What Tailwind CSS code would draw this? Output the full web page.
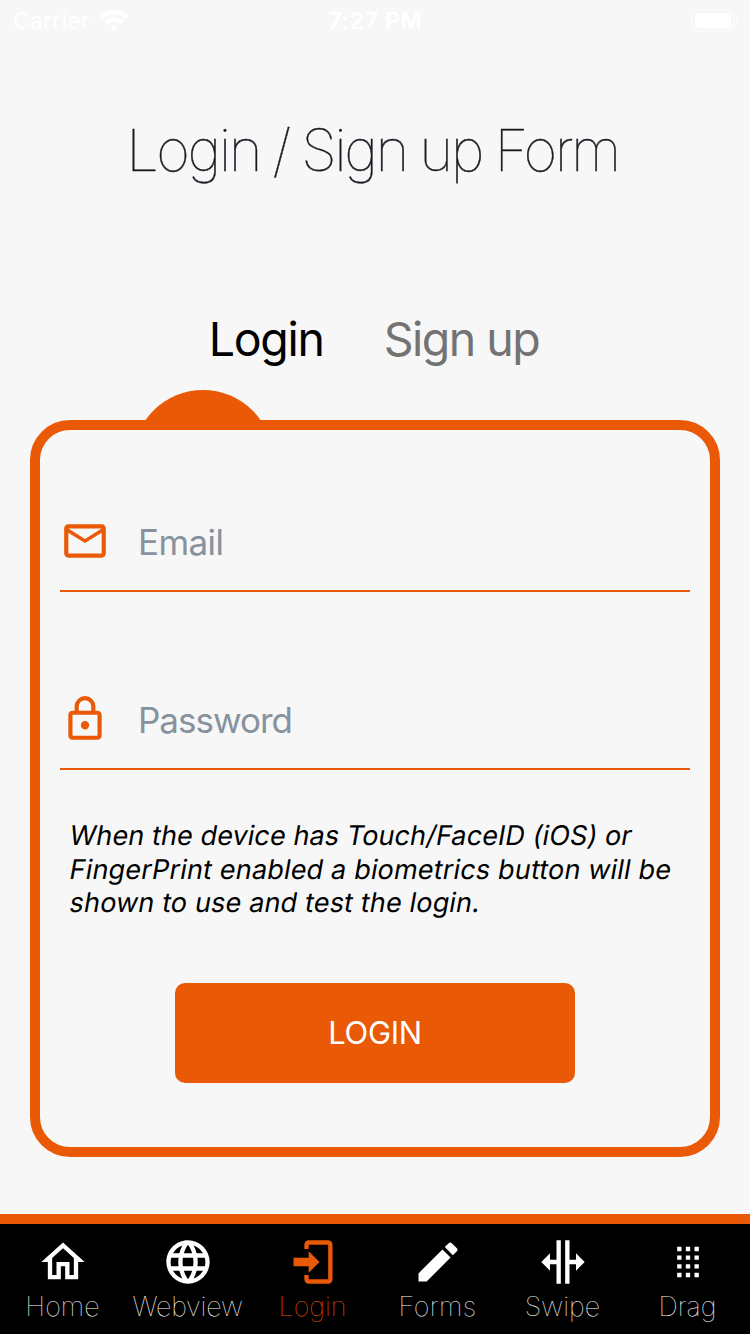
<!DOCTYPE html>
<html lang="en">
<head>
<meta charset="utf-8">
<title>Login</title>
<script src="https://cdn.jsdelivr.net/npm/@tailwindcss/browser@4"></script>
</head>
<body class="bg-[#f7f7f7] font-['Inter',sans-serif]">
<div class="w-[750px] h-[1334px] flex flex-col overflow-hidden whitespace-nowrap">
  <header class="h-10 shrink-0 grid grid-cols-3 items-center pl-[13px] pr-3 text-white text-[23px] leading-10">
    <div class="flex items-center gap-[9px]">
      <span class="pt-px tracking-[0.2px]">Carrier</span>
      <svg class="w-[30px] h-[22px]" viewBox="0 0 30 22" fill="none" stroke="#fff" stroke-width="4.6"><path d="M1.8 7.8a18.5 18.5 0 0 1 26.4 0M6.8 13a11.4 11.4 0 0 1 16.4 0"/><path d="M15 22l-4-4.4a6 6 0 0 1 8 0z" fill="#fff" stroke="none"/></svg>
    </div>
    <span class="pt-px text-center font-semibold tracking-[0.6px]">7:27 PM</span>
    <div class="flex justify-end items-center gap-px pb-px">
      <div class="w-11 h-[23px] rounded-[7px] border-2 border-white/40 p-[2px]"><div class="h-full rounded-[4px] bg-white"></div></div>
      <div class="w-[2px] h-2 rounded-r-full bg-white/40"></div>
    </div>
  </header>

  <h1 class="h-[220px] shrink-0 flex items-center justify-center pr-[5px] text-[58px] font-thin tracking-[-2.45px] [word-spacing:-1.5px] text-[#161b22] [-webkit-text-stroke:0.4px_#161b22]">Login / Sign up Form</h1>

  <div class="h-[160px] shrink-0 flex justify-center gap-[60px] pt-[47px] pr-[2px] text-[46.5px] leading-[64px] relative">
    <span class="text-black tracking-[-1.3px]">Login</span>
    <span class="text-[#737373] tracking-[-1.5px]">Sign up</span>
    <div class="absolute left-[133px] top-[130px] w-[140px] h-[30px] overflow-hidden"><div class="w-[140px] h-[140px] rounded-full bg-[#ea5906]"></div></div>
  </div>

  <main class="mx-[30px] h-[737px] shrink-0 border-[10px] border-[#ea5906] rounded-[40px] px-5 flex flex-col">
    <div class="mt-[60px] h-[102px] border-b-2 border-[#ea5906] flex items-center gap-7 pt-[2px] text-[#86939e] text-[35px]">
      <svg class="w-[50px] h-[50px] fill-[#ea5906]" viewBox="0 0 24 24"><path d="M22 6C22 4.9 21.1 4 20 4H4C2.9 4 2 4.9 2 6V18C2 19.1 2.9 20 4 20H20C21.1 20 22 19.1 22 18V6M20 6L12 11L4 6H20M20 18H4V8L12 13L20 8V18Z"/></svg>
      <span class="pt-[2px] tracking-[-0.6px]">Email</span>
    </div>
    <div class="mt-[76px] h-[102px] border-b-2 border-[#ea5906] flex items-center gap-7 pt-[2px] text-[#86939e] text-[35px]">
      <svg class="w-[50px] h-[50px] fill-[#ea5906]" viewBox="0 0 24 24"><path d="M12,17C10.89,17 10,16.1 10,15C10,13.89 10.89,13 12,13A2,2 0 0,1 14,15A2,2 0 0,1 12,17M18,20V10H6V20H18M18,8A2,2 0 0,1 20,10V20A2,2 0 0,1 18,22H6C4.89,22 4,21.1 4,20V10C4,8.89 4.89,8 6,8H7V6A5,5 0 0,1 12,1A5,5 0 0,1 17,6V8H18M12,3A3,3 0 0,0 9,6V8H15V6A3,3 0 0,0 12,3Z"/></svg>
      <span class="pt-[2px] tracking-[-1px]">Password</span>
    </div>
    <div class="mt-[49px] ml-[10px] h-[101px] text-[27px] leading-[33.5px] text-black">
      <p class="-skew-x-[10deg] tracking-[0.1px]">When the device has Touch/FaceID (iOS) or</p>
      <p class="-skew-x-[10deg] tracking-[0.18px]">FingerPrint enabled a biometrics button will be</p>
      <p class="-skew-x-[10deg] tracking-[0.16px]">shown to use and test the login.</p>
    </div>
    <button class="mt-[63px] mx-auto w-[400px] h-[100px] rounded-[10px] bg-[#ea5906] text-white text-[31px] tracking-[-0.3px]">LOGIN</button>
  </main>

  <nav class="mt-[57px] h-[120px] shrink-0 border-t-[10px] border-[#ea5906] bg-black grid grid-cols-6 pt-3 text-white text-[27px] leading-8 font-thin fill-white">
    <div class="flex flex-col items-center gap-[3px]">
      <svg class="w-[52px] h-[52px] shrink-0" viewBox="0 0 24 24"><path d="M12,5.69L17,10.19V18H15V12H9V18H7V10.19L12,5.69M12,3L2,12H5V20H11V14H13V20H19V12H22"/></svg>
      <span>Home</span>
    </div>
    <div class="flex flex-col items-center gap-[3px]">
      <svg class="w-[52px] h-[52px] shrink-0" viewBox="0 0 24 24"><path d="M16.36,14C16.44,13.34 16.5,12.68 16.5,12C16.5,11.32 16.44,10.66 16.36,10H19.74C19.9,10.64 20,11.31 20,12C20,12.69 19.9,13.36 19.74,14M14.59,19.56C15.19,18.45 15.65,17.25 15.97,16H18.92C17.96,17.65 16.43,18.93 14.59,19.56M14.34,14H9.66C9.56,13.34 9.5,12.68 9.5,12C9.5,11.32 9.56,10.65 9.66,10H14.34C14.43,10.65 14.5,11.32 14.5,12C14.5,12.68 14.43,13.34 14.34,14M12,19.96C11.17,18.76 10.5,17.43 10.09,16H13.91C13.5,17.43 12.83,18.76 12,19.96M8,8H5.08C6.03,6.34 7.57,5.06 9.4,4.44C8.8,5.55 8.35,6.75 8,8M5.08,16H8C8.35,17.25 8.8,18.45 9.4,19.56C7.57,18.93 6.03,17.65 5.08,16M4.26,14C4.1,13.36 4,12.69 4,12C4,11.31 4.1,10.64 4.26,10H7.64C7.56,10.66 7.5,11.32 7.5,12C7.5,12.68 7.56,13.34 7.64,14M12,4.03C12.83,5.23 13.5,6.57 13.91,8H10.09C10.5,6.57 11.17,5.23 12,4.03M18.92,8H15.97C15.65,6.75 15.19,5.55 14.59,4.44C16.43,5.07 17.96,6.34 18.92,8M12,2C6.47,2 2,6.5 2,12A10,10 0 0,0 12,22A10,10 0 0,0 22,12A10,10 0 0,0 12,2Z"/></svg>
      <span class="tracking-[-0.2px]">Webview</span>
    </div>
    <div class="flex flex-col items-center gap-[3px] text-[#ea5906] fill-[#ea5906]">
      <svg class="w-[52px] h-[52px] shrink-0" viewBox="0 0 24 24"><path d="M19 2H10a2 2 0 0 0-2 2v2h2V4h9v16h-9v-2H8v2a2 2 0 0 0 2 2h9a2 2 0 0 0 2-2V4a2 2 0 0 0-2-2M10 7v3H3v4h7v3l5-5z"/></svg>
      <span>Login</span>
    </div>
    <div class="flex flex-col items-center gap-[3px]">
      <svg class="w-[52px] h-[52px] shrink-0" viewBox="0 0 24 24"><path d="M20.71,7.04C21.1,6.65 21.1,6 20.71,5.63L18.37,3.29C18,2.9 17.35,2.9 16.96,3.29L15.12,5.12L18.87,8.87M3,17.25V21H6.75L17.81,9.93L14.06,6.18L3,17.25Z"/></svg>
      <span class="tracking-[0.4px]">Forms</span>
    </div>
    <div class="flex flex-col items-center gap-[3px]">
      <svg class="w-[52px] h-[52px] shrink-0" viewBox="0 0 24 24"><path d="M18,16V13H15V22H13V2H15V11H18V8L22,12L18,16M2,12L6,16V13H9V22H11V2H9V11H6V8L2,12Z"/></svg>
      <span>Swipe</span>
    </div>
    <div class="flex flex-col items-center gap-[3px]">
      <svg class="w-[52px] h-[52px] shrink-0" viewBox="0 0 24 24"><path d="M7 5h2v2H7zM11 5h2v2h-2zM15 5h2v2h-2zM7 9h2v2H7zM11 9h2v2h-2zM15 9h2v2h-2zM7 13h2v2H7zM11 13h2v2h-2zM15 13h2v2h-2zM7 17h2v2H7zM11 17h2v2h-2zM15 17h2v2h-2z"/></svg>
      <span>Drag</span>
    </div>
  </nav>
</div>
</body>
</html>
